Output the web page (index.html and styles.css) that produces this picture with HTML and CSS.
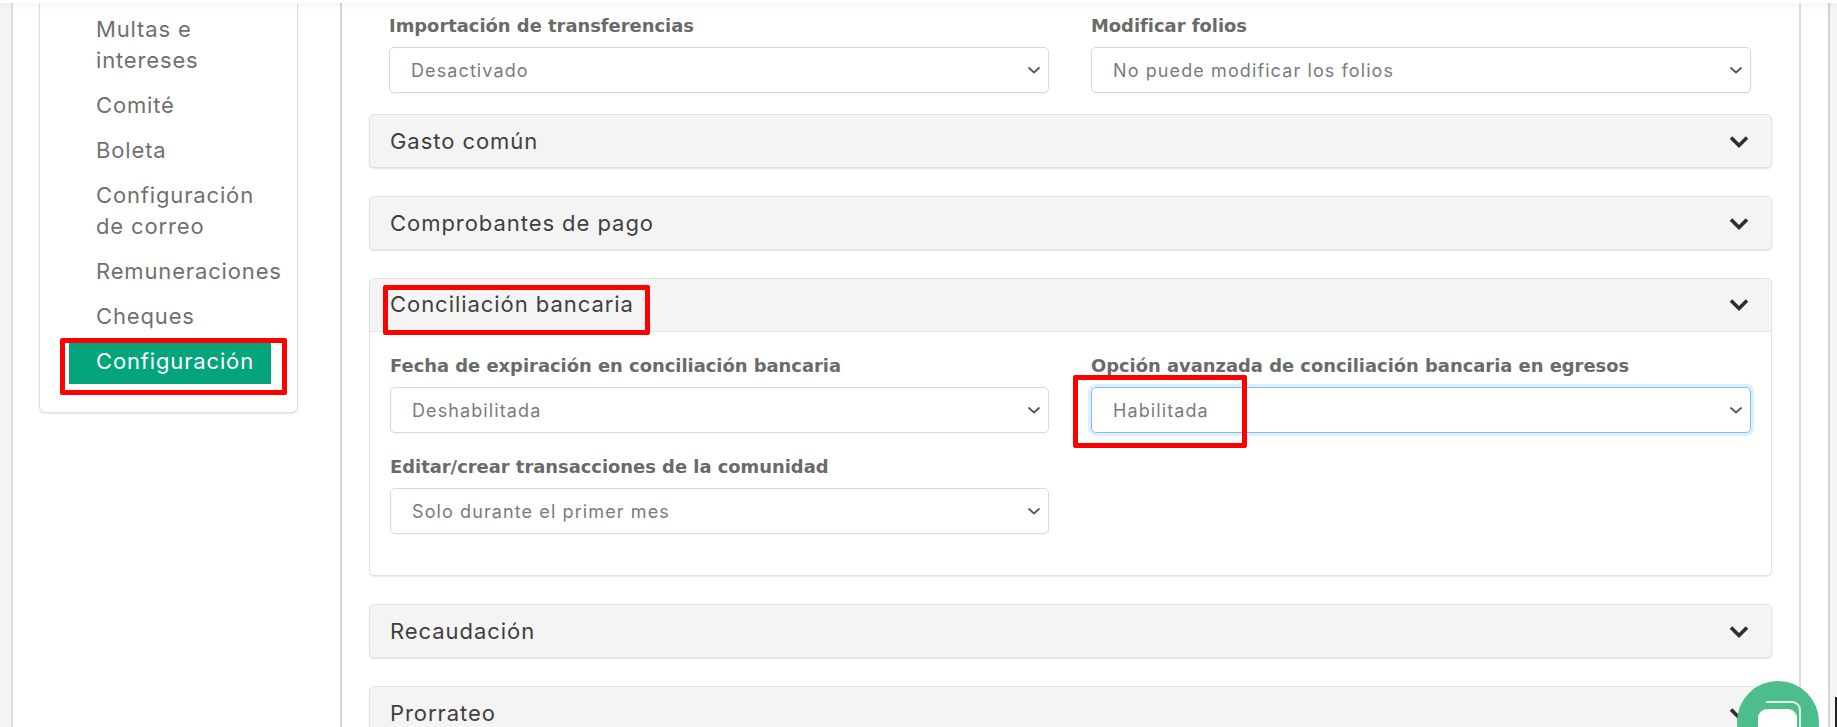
FILE: index.html
```html
<!DOCTYPE html>
<html lang="es">
<head>
<meta charset="utf-8">
<title>Configuración</title>
<link rel="stylesheet" href="styles.css">
</head>
<body>
<div class="topbar"></div>
<div class="shell">
  <aside class="side-col">
    <nav class="side-card">
      <a class="nav-item">Multas e intereses</a>
      <a class="nav-item">Comité</a>
      <a class="nav-item">Boleta</a>
      <a class="nav-item">Configuración de correo</a>
      <a class="nav-item">Remuneraciones</a>
      <a class="nav-item">Cheques</a>
      <a class="nav-item active">Configuración</a>
    </nav>
  </aside>
  <main class="main">
    <div class="form-grid top-grid">
      <div class="group">
        <label class="label">Importación de transferencias</label>
        <div class="select-wrap">
          <select class="select"><option>Desactivado</option></select>
          <svg class="select-chev" viewBox="0 0 14 8"><path d="M1.5 1.5L7 6.5l5.5-5"/></svg>
        </div>
      </div>
      <div class="group">
        <label class="label">Modificar folios</label>
        <div class="select-wrap">
          <select class="select"><option>No puede modificar los folios</option></select>
          <svg class="select-chev" viewBox="0 0 14 8"><path d="M1.5 1.5L7 6.5l5.5-5"/></svg>
        </div>
      </div>
    </div>

    <section class="acc">
      <header class="acc-head"><span>Gasto común</span><svg class="acc-chev" viewBox="0 0 20 14"><path d="M2 2.5l8 8 8-8"/></svg></header>
    </section>
    <section class="acc">
      <header class="acc-head"><span>Comprobantes de pago</span><svg class="acc-chev" viewBox="0 0 20 14"><path d="M2 2.5l8 8 8-8"/></svg></header>
    </section>
    <section class="acc open">
      <header class="acc-head"><span>Conciliación bancaria</span><svg class="acc-chev" viewBox="0 0 20 14"><path d="M2 2.5l8 8 8-8"/></svg></header>
      <div class="acc-body form-grid">
        <div class="group">
          <label class="label">Fecha de expiración en conciliación bancaria</label>
          <div class="select-wrap">
            <select class="select"><option>Deshabilitada</option></select>
            <svg class="select-chev" viewBox="0 0 14 8"><path d="M1.5 1.5L7 6.5l5.5-5"/></svg>
          </div>
        </div>
        <div class="group">
          <label class="label">Opción avanzada de conciliación bancaria en egresos</label>
          <div class="select-wrap">
            <select class="select focus"><option>Habilitada</option></select>
            <svg class="select-chev" viewBox="0 0 14 8"><path d="M1.5 1.5L7 6.5l5.5-5"/></svg>
          </div>
        </div>
        <div class="group">
          <label class="label">Editar/crear transacciones de la comunidad</label>
          <div class="select-wrap">
            <select class="select"><option>Solo durante el primer mes</option></select>
            <svg class="select-chev" viewBox="0 0 14 8"><path d="M1.5 1.5L7 6.5l5.5-5"/></svg>
          </div>
        </div>
      </div>
    </section>
    <section class="acc">
      <header class="acc-head"><span>Recaudación</span><svg class="acc-chev" viewBox="0 0 20 14"><path d="M2 2.5l8 8 8-8"/></svg></header>
    </section>
    <section class="acc">
      <header class="acc-head"><span>Prorrateo</span><svg class="acc-chev" viewBox="0 0 20 14"><path d="M2 2.5l8 8 8-8"/></svg></header>
    </section>
  </main>
</div>

<div class="mark mark-nav"></div>
<div class="mark mark-title"></div>
<div class="mark mark-select"></div>

<div class="chat">
  <svg class="chat-icon" viewBox="0 0 48 48">
    <path class="chat-back" d="M12 2h26a8 8 0 0 1 8 8v26"/>
    <rect class="chat-front" x="4" y="9" width="39" height="42" rx="9"/>
  </svg>
</div>
<div class="edge"></div>
</body>
</html>
```

FILE: styles.css
```css
* { box-sizing: border-box; }
html, body { margin: 0; height: 727px; overflow: hidden; }
body {
  background: #f5f5f5;
  font-family: Inter, "DejaVu Sans", sans-serif;
  color: #6b6b6b;
  position: relative;
}
.topbar {
  height: 3px;
  background: #fff;
  box-shadow: 0 2px 6px rgba(90, 110, 140, .14);
  position: relative;
  z-index: 2;
}
.shell {
  display: flex;
  margin-left: 11px;
  width: 1819px;
  height: 724px;
  background: #fff;
  border-left: 2px solid #dedede;
  border-right: 2px solid #d4d4d4;
}
.side-col { width: 327px; flex: none; padding-left: 26px; }
.side-card {
  width: 259px;
  height: 410px;
  padding: 4px 0 0 29px;
  border: 1px solid #dfdfdf;
  border-top: 0;
  border-radius: 0 0 6px 6px;
  box-shadow: 0 1px 2px rgba(0, 0, 0, .1);
  display: flex;
  flex-direction: column;
}
.nav-item {
  display: block;
  width: 202px;
  padding: 7px 0 7px 27px;
  font-size: 22px;
  line-height: 31px;
  letter-spacing: .85px;
  color: #707070;
}
.nav-item.active { background: #04a57c; color: #fff; }
.main {
  width: 1461px;
  flex: none;
  padding: 10px 27px 0 27px;
  border-left: 2px solid #d6d6d6;
  border-right: 2px solid #dedede;
}
.form-grid {
  display: grid;
  grid-template-columns: 659px 660px;
  column-gap: 42px;
}
.top-grid { padding-left: 20px; grid-template-columns: 660px 660px; }
.group { height: 101px; }
.label {
  display: block;
  height: 24px;
  margin-bottom: 10px;
  font-family: "DejaVu Sans", Inter, sans-serif;
  font-size: 17.9px;
  line-height: 25px;
  font-weight: 700;
  color: #6a6a6a;
  white-space: nowrap;
}
.select-wrap { position: relative; height: 46px; }
.select {
  display: block;
  width: 100%;
  height: 46px;
  padding: 0 0 0 21px;
  appearance: none;
  -webkit-appearance: none;
  background: #fff;
  border: 1px solid #d9d9d9;
  border-radius: 5px;
  box-shadow: 0 1px 1px rgba(0, 0, 0, .04);
  font-family: inherit;
  font-size: 18px;
  letter-spacing: 1.1px;
  color: #7b7b7b;
  outline: 0;
}
.select.focus {
  border-color: #80bdff;
  box-shadow: 0 0 0 3px rgba(0, 123, 255, .12);
}
.select-chev {
  position: absolute;
  right: 8px;
  top: 19px;
  width: 14px;
  height: 8px;
  fill: none;
  stroke: #555;
  stroke-width: 1.7;
  pointer-events: none;
}
.acc {
  height: 54px;
  margin-bottom: 28px;
  background: #fff;
  border: 1px solid #e2e2e2;
  border-radius: 5px;
  box-shadow: 0 1px 2px rgba(0, 0, 0, .12);
  overflow: hidden;
}
.acc.open { height: 298px; box-shadow: 0 1px 1px rgba(0, 0, 0, .08); }
.acc-head {
  height: 53px;
  padding: 0 22px 2px 20px;
  display: flex;
  align-items: center;
  justify-content: space-between;
  background: #f4f4f4;
  font-size: 22px;
  letter-spacing: .95px;
  color: #3f3f3f;
}
.open .acc-head { border-bottom: 1px solid #e6e6e6; }
.acc-chev {
  width: 20px;
  height: 14px;
  margin-top: 2px;
  fill: none;
  stroke: #2e2e2e;
  stroke-width: 3.6;
}
.acc-body { padding: 21px 20px 0 20px; }
.mark {
  position: absolute;
  border: 5px solid #fe0000;
  border-radius: 2px;
  z-index: 5;
}
.mark-nav { left: 60px; top: 338px; width: 227px; height: 57px; }
.mark-title { left: 383px; top: 285px; width: 267px; height: 50px; }
.mark-select { left: 1073px; top: 375px; width: 174px; height: 73px; }
.chat {
  position: absolute;
  left: 1737px;
  top: 681px;
  width: 82px;
  height: 82px;
  border-radius: 50%;
  background: #4dbd8c;
  z-index: 6;
  display: flex;
  justify-content: center;
}
.chat-icon { width: 48px; height: 48px; margin-top: 19px; overflow: visible; }
.chat-back { fill: none; stroke: #fff; stroke-width: 2; opacity: .8; }
.chat-front { fill: #fff; }
.edge {
  position: absolute;
  right: 0;
  top: 697px;
  width: 2px;
  height: 30px;
  background: #222;
}
```
